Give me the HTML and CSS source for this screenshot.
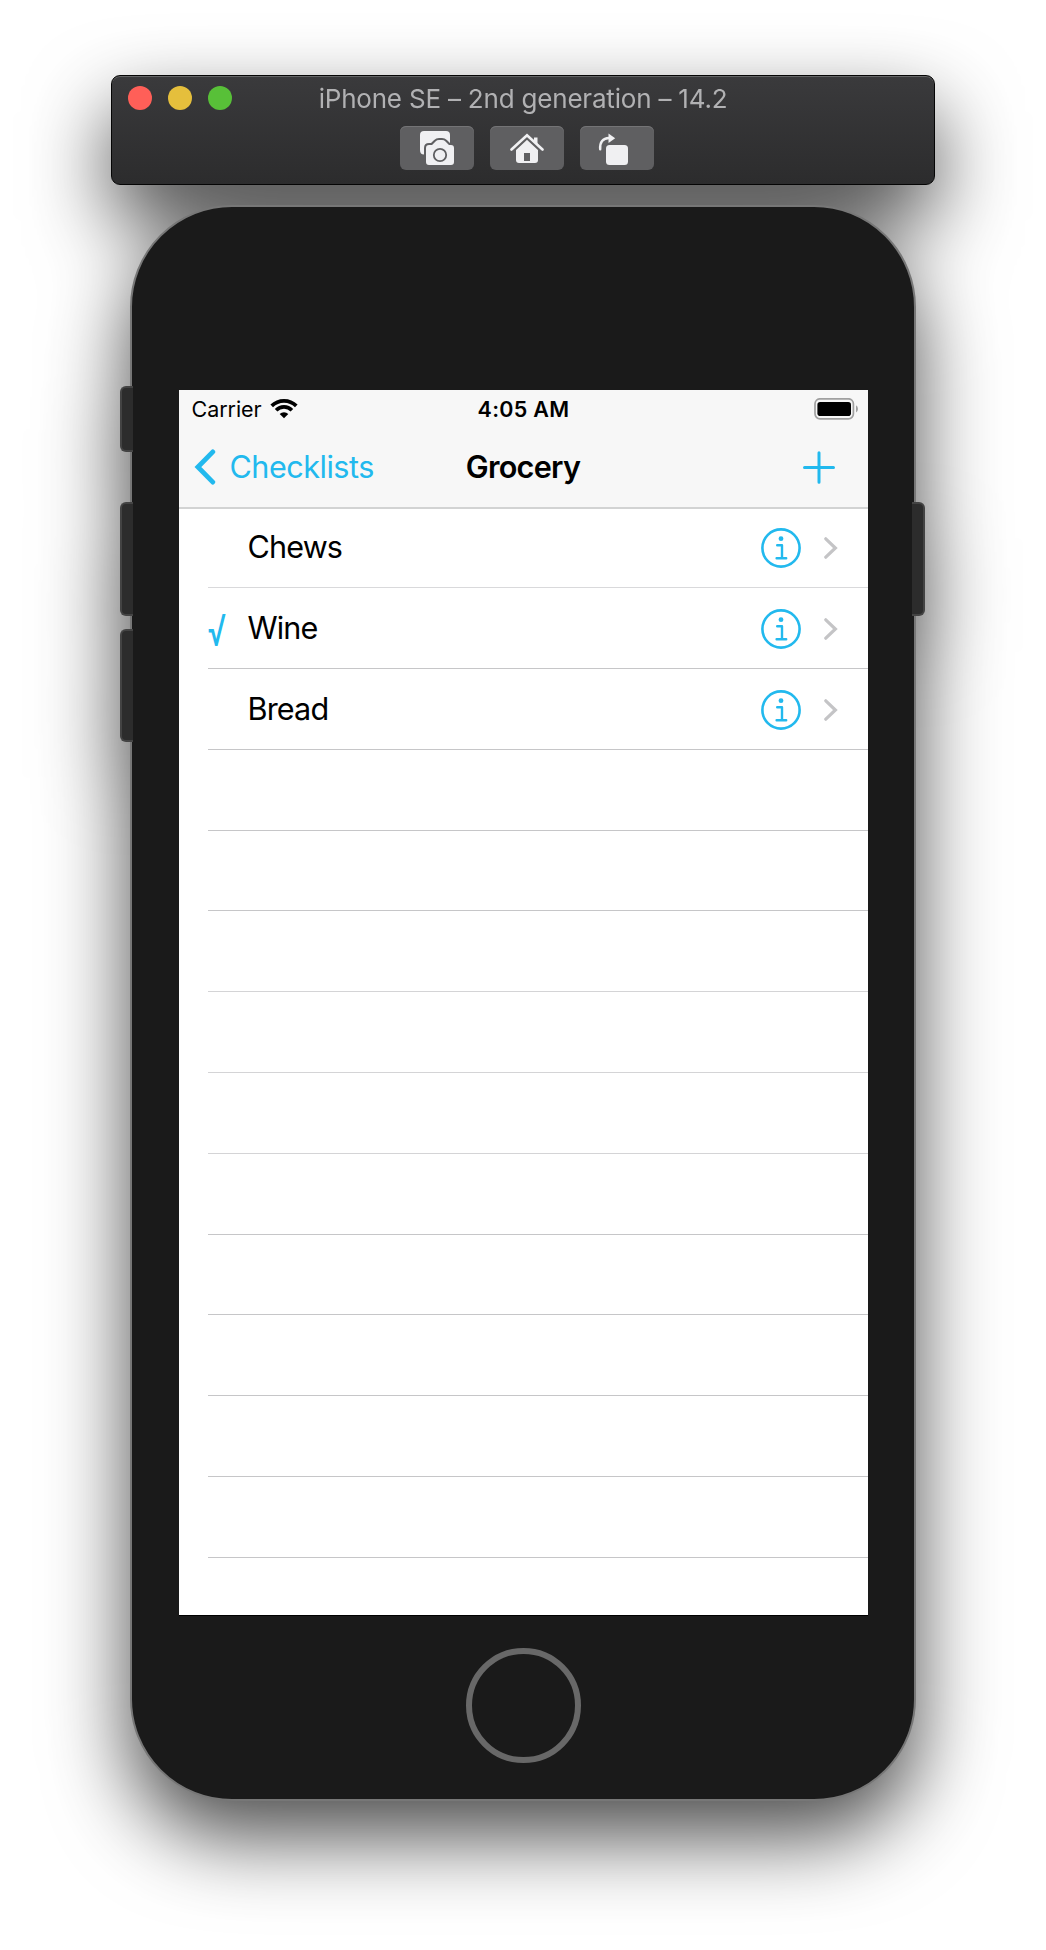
FILE: index.html
```html
<!DOCTYPE html>
<html lang="en">
<head>
<meta charset="utf-8">
<title>iPhone SE – 2nd generation – 14.2</title>
<link rel="stylesheet" href="styles.css">
</head>
<body>
<svg class="defs" aria-hidden="true">
  <symbol id="info" viewBox="0 0 40 40">
    <circle cx="20" cy="20" r="18.6" fill="none" stroke="currentColor" stroke-width="2.6"/>
    <circle cx="20" cy="10.7" r="2.4" fill="currentColor"/>
    <path d="M16.2 17.2H21V30.2M15.6 30.2H25.2" fill="none" stroke="currentColor" stroke-width="2.4" stroke-linecap="round" stroke-linejoin="round"/>
  </symbol>
  <symbol id="chevron" viewBox="0 0 14 22">
    <path d="M1.8 1.8 11.4 11 1.8 20.2" fill="none" stroke="currentColor" stroke-width="3.2" stroke-linecap="round" stroke-linejoin="miter"/>
  </symbol>
</svg>
<div class="simulator">
  <header class="toolbar">
    <div class="titlebar">
      <div class="lights"><i class="light close"></i><i class="light minimize"></i><i class="light zoom"></i></div>
      <h1 class="window-title"><span>iPhone SE – 2nd generation – 14.2</span></h1>
    </div>
    <div class="tools">
      <button class="tool" aria-label="Screenshot">
        <svg width="74" height="44" viewBox="0 0 74 44">
          <path d="M24 5H46Q50 5 50 9V20H20V9Q20 5 24 5Z" fill="#f0f0f2"/>
          <path d="M20 20H30V28.6H24Q20 28.6 20 24Z" fill="#f0f0f2"/>
          <path d="M29 19H32L35.5 15.4Q37 14 39 14H42Q44 14 45.500 15.4L49 19H51Q54 19 54 22V36Q54 39 51 39H29Q26 39 26 36V22Q26 19 29 19Z" fill="#f0f0f2" stroke="#5f5f61" stroke-width="4" paint-order="stroke"/>
          <circle cx="40" cy="29" r="6.2" fill="none" stroke="#5f5f61" stroke-width="1.8"/>
        </svg>
      </button>
      <button class="tool" aria-label="Home">
        <svg width="74" height="44" viewBox="0 0 74 44">
          <path d="M26 22.500 37 11.500 48 22.500V34Q48 37 45 37H29Q26 37 26 34Z" fill="#f0f0f2"/>
          <path d="M44 11.500H47.500V20H44Z" fill="#f0f0f2"/>
          <path d="M23 24.500 37 11.500 51 24.500" fill="none" stroke="#5f5f61" stroke-width="3.500"/>
          <path d="M21.500 23.500 37 9.200 52.500 23.500" fill="none" stroke="#f0f0f2" stroke-width="2.600" stroke-linecap="round"/>
          <path d="M34 27H40V35H34Z" fill="#5f5f61"/>
        </svg>
      </button>
      <button class="tool" aria-label="Rotate">
        <svg width="74" height="44" viewBox="0 0 74 44">
          <rect x="26" y="19" width="22" height="20" rx="3.500" fill="#f0f0f2"/>
          <path d="M20.200 23.400C19.500 16 23 12.200 29 12" fill="none" stroke="#f0f0f2" stroke-width="2.400" stroke-linecap="round"/>
          <path d="M28.500 7.500 35.200 12.200 28.500 17Z" fill="#f0f0f2"/>
        </svg>
      </button>
    </div>
  </header>

  <div class="device">
    <i class="key mute"></i><i class="key volume-up"></i><i class="key volume-down"></i><i class="key power"></i>
    <main class="screen">
      <div class="statusbar">
        <div class="carrier"><span class="carrier-name">Carrier</span>
          <svg width="28" height="21" viewBox="0 0 28 21">
            <g fill="none" stroke="#000" stroke-width="3.700">
              <path d="M1.700 7.900A17.400 17.400 0 0 1 26.300 7.900"/>
              <path d="M6.100 12.200A11.200 11.200 0 0 1 21.900 12.200"/>
            </g>
            <path d="M14 20.300 9.700 16A6.200 6.200 0 0 1 18.300 16Z"/>
          </svg>
        </div>
        <div class="clock"><span>4:05 AM</span></div>
        <svg class="battery" width="46" height="22" viewBox="0 0 46 22">
          <rect x="1" y=".8" width="38.400" height="20" rx="5" fill="none" stroke="#a0a0a0" stroke-width="1.700"/>
          <rect x="3.400" y="4" width="33.600" height="14" rx="2.800"/>
          <path d="M42 7.200Q44 8.500 44 10.900T42 14.600Z" fill="#a0a0a0"/>
        </svg>
      </div>
      <nav class="navbar">
        <a class="back">
          <svg width="22" height="36" viewBox="0 0 22 36"><path d="M18.800 2.900 3.900 18 18.800 33.100" fill="none" stroke="currentColor" stroke-width="4.800" stroke-linecap="round" stroke-linejoin="miter"/></svg>
          <span>Checklists</span>
        </a>
        <h2 class="nav-title"><span>Grocery</span></h2>
        <svg class="add" width="32" height="33" viewBox="0 0 32 33"><path d="M1.500 16.500H30.500M16 1.700V31.300" stroke="currentColor" stroke-width="3" stroke-linecap="round"/></svg>
      </nav>
      <ul class="list">
        <li class="row"><span class="check"></span><span class="label">Chews</span><svg class="info"><use href="#info"/></svg><svg class="disclosure"><use href="#chevron"/></svg></li>
        <li class="row"><span class="check">√</span><span class="label">Wine</span><svg class="info"><use href="#info"/></svg><svg class="disclosure"><use href="#chevron"/></svg></li>
        <li class="row"><span class="check"></span><span class="label">Bread</span><svg class="info"><use href="#info"/></svg><svg class="disclosure"><use href="#chevron"/></svg></li>
        <li class="row"></li><li class="row"></li><li class="row soft"></li><li class="row soft"></li><li class="row soft"></li>
        <li class="row"></li><li class="row"></li><li class="row"></li><li class="row"></li><li class="row"></li>
      </ul>
    </main>
    <div class="home"></div>
  </div>
</div>
</body>
</html>
```
FILE: styles.css
```css
* { box-sizing: border-box; }
body {
  margin: 0;
  height: 1950px;
  background: #fff;
  font-family: Inter, "Liberation Sans", sans-serif;
  overflow: hidden;
}
.defs { display: block; width: 0; height: 0; }
h1, h2, ul { margin: 0; padding: 0; list-style: none; }
svg { display: block; flex: none; }
.simulator {
  display: flex;
  flex-direction: column;
  align-items: center;
  gap: 20px;
  padding-top: 75px;
  filter: drop-shadow(0 36px 41px rgba(0, 0, 0, .7));
}

.toolbar {
  width: 824px;
  height: 110px;
  border: 1px solid #050505;
  border-radius: 9px;
  background: linear-gradient(#3a3a3c, #2c2c2d);
  box-shadow: inset 0 1px 0 #646566;
}
.titlebar { display: grid; grid-template-columns: 1fr auto 1fr; align-items: center; height: 44px; padding: 0 16px; }
.lights { display: flex; gap: 16px; }
.light { width: 24px; height: 24px; border-radius: 50%; }
.close { background: #ff5f58; }
.minimize { background: #e5bf3c; }
.zoom { background: #58c038; }
.window-title { padding-top: 2px; font-size: 26px; font-weight: 400; line-height: 42px; letter-spacing: -.2px; color: #b1b1b3; white-space: nowrap; }
.tools { display: flex; justify-content: center; gap: 16px; padding: 6px 0 0 8px; }
.tool {
  width: 74px;
  height: 44px;
  padding: 0;
  border: 0;
  border-radius: 6px;
  background: #5f5f61;
  box-shadow: inset 0 1px 0 #747476;
}

.device {
  position: relative;
  display: flex;
  flex-direction: column;
  align-items: center;
  width: 786px;
  height: 1596px;
  padding-top: 183px;
  border: 2px solid #777;
  border-radius: 102px;
  background: #1a1a1a;
}
.key { position: absolute; width: 13px; background: #2c2c2c; border: 2px solid #434343; }
.mute, .volume-up, .volume-down { left: -12px; border-right: 0; border-radius: 6px 0 0 6px; }
.mute { top: 179px; height: 66px; }
.volume-up { top: 295px; height: 114px; }
.volume-down { top: 422px; height: 113px; }
.power { right: -11px; top: 295px; height: 114px; border-left: 0; border-radius: 0 6px 6px 0; }
.screen { width: 689px; height: 1225px; background: #fff; box-shadow: 0 1px 0 #000; }
.home { width: 115px; height: 115px; margin-top: 33px; border: 6px solid #686868; border-radius: 50%; }

.statusbar, .navbar { display: grid; grid-template-columns: minmax(0, 1fr) auto minmax(0, 1fr); align-items: center; background: #f7f7f7; }
.statusbar { height: 37px; padding: 0 8px 0 13px; }
.carrier { display: flex; align-items: center; gap: 8px; font-size: 21.500px; }
.carrier-name { letter-spacing: -.05px; }
.clock { padding-right: 4px; font-size: 21.500px; font-weight: 600; letter-spacing: .3px; }
.battery { justify-self: end; }
.navbar { height: 82px; padding: 0 33px 0 15px; border-bottom: 2px solid #d2d3d3; }
.back { display: flex; align-items: center; gap: 14px; font-size: 30.600px; letter-spacing: -.5px; color: #22b9ee; }
.back span, .nav-title span { display: block; padding-bottom: 2px; }
.nav-title { margin-left: 18px; font-size: 30.600px; font-weight: 600; letter-spacing: -.7px; }
.add { justify-self: end; color: #22b9ee; }

.row {
  display: flex;
  align-items: center;
  height: 80.800px;
  margin-left: 29px;
  padding: 2px 30px 0 0;
  border-bottom: 1px solid #c6c6c8;
}
.row:first-child { height: 79.300px; padding-top: 0; border-bottom-color: #d9d9db; }
.row.soft { border-bottom-color: #d4d4d6; }
.check { width: 40px; padding-top: 2px; font-size: 30px; font-weight: 400; line-height: 32px; color: #22b9ee; transform: scaleY(1.450); }
.label { flex: 1; padding-bottom: 3px; font-size: 30.600px; letter-spacing: -.85px; }
.info { width: 40px; height: 40px; color: #22b9ee; }
.disclosure { width: 14px; height: 22px; margin-left: 23px; color: #c4c4c6; }
```
